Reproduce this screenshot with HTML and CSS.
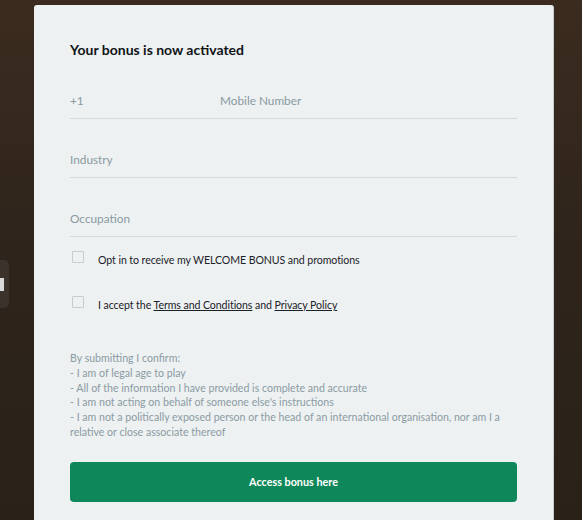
FILE: index.html
```html
<!DOCTYPE html>
<html>
<head>
<meta charset="utf-8">
<link rel="stylesheet" href="styles.css">
</head>
<body>
<div class="side-tab"><span class="side-tab-mark"></span></div>
<div class="page">
  <div class="card">
    <h1 class="title">Your bonus is now activated</h1>
    <div class="field phone">
      <span class="prefix">+1</span>
      <span class="placeholder">Mobile Number</span>
    </div>
    <div class="field"><span class="placeholder">Industry</span></div>
    <div class="field"><span class="placeholder">Occupation</span></div>
    <label class="check first"><span class="box"></span><span>Opt in to receive my WELCOME BONUS and promotions</span></label>
    <label class="check"><span class="box"></span><span>I accept the <a href="#">Terms and Conditions</a> and <a href="#">Privacy Policy</a></span></label>
    <p class="disclaimer">By submitting I confirm:<br>- I am of legal age to play<br>- All of the information I have provided is complete and accurate<br>- I am not acting on behalf of someone else's instructions<br>- I am not a politically exposed person or the head of an international organisation, nor am I a relative or close associate thereof</p>
    <button class="cta">Access bonus here</button>
  </div>
</div>
</body>
</html>
```
FILE: styles.css
```css
html, body {
  margin: 0;
  height: 100%;
}
body {
  background: linear-gradient(180deg, #3b2b1f 0%, #2e241b 50%, #2a2119 100%);
  font-family: "Lato", "Open Sans", sans-serif;
  overflow: hidden;
}
.page {
  padding: 5px 28px 0 34px;
}
.card {
  width: 520px;
  box-sizing: border-box;
  background: #edf1f2;
  border-right: 1px solid #c9ced0;
  border-radius: 3px 3px 0 0;
  padding: 36px 36px 40px 36px;
  min-height: 560px;
}
.title {
  margin: 0;
  font-size: 14px;
  font-weight: 700;
  color: #111417;
  line-height: 18px;
}
.field {
  display: flex;
  line-height: 16px;
  padding-bottom: 9px;
  margin-top: 33px;
  border-bottom: 1px solid #d3d9dc;
  font-size: 11.8px;
  color: #8a9aa2;
}
.phone {
  margin-top: 34px;
}
.prefix {
  width: 150px;
}
.check {
  display: flex;
  align-items: center;
  line-height: 16px;
  margin-top: 29px;
  font-size: 10.6px;
  letter-spacing: -0.08px;
  color: #1b2227;
}
.check.first {
  margin-top: 15px;
}
.box {
  width: 10px;
  height: 10px;
  border: 1px solid #c6cdd1;
  border-radius: 1px;
  margin: 0 14px 0 2px;
  position: relative;
  top: -3px;
}
.check a {
  color: #1b2227;
}
.disclaimer {
  margin: 38px 0 0;
  font-size: 10.6px;
  line-height: 14.8px;
  color: #8b9ba2;
}
.cta {
  display: block;
  width: 100%;
  height: 40px;
  margin-top: 22px;
  border: none;
  border-radius: 4px;
  background: #0e885a;
  color: #fff;
  font-family: inherit;
  font-weight: 700;
  font-size: 10.8px;
}
.side-tab {
  position: absolute;
  left: -10px;
  top: 260px;
  width: 19px;
  height: 48px;
  border-radius: 5px;
  background: #3a322b;
  display: flex;
  align-items: center;
}
.side-tab-mark {
  margin-left: 10px;
  width: 4px;
  height: 13px;
  background: #d9d9d9;
}
```
